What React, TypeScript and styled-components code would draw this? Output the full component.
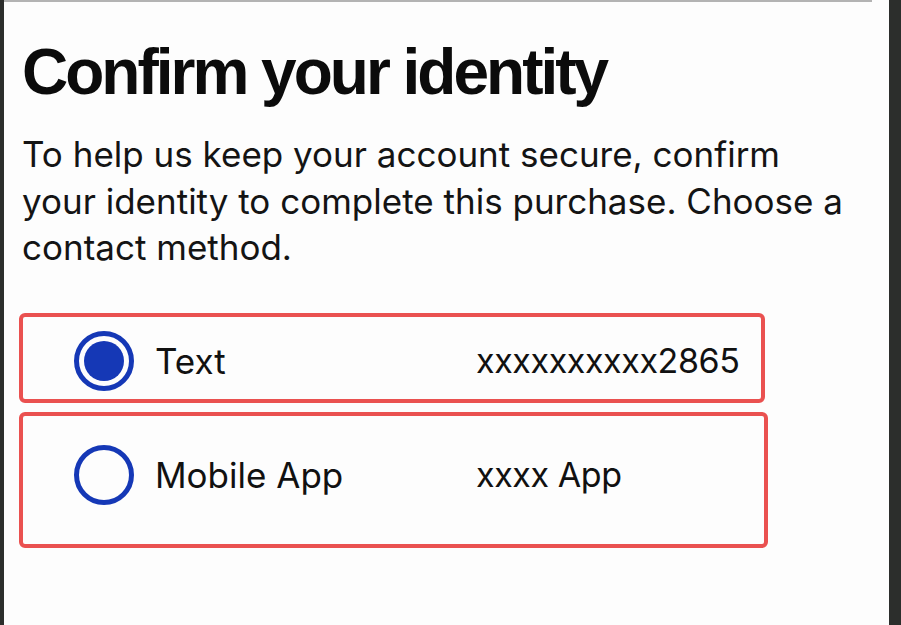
import React from "react";
import styled, { createGlobalStyle } from "styled-components";

const Global = createGlobalStyle`
  html, body { margin: 0; padding: 0; background: #2c2e2c; }
  body { font-family: Inter, "Liberation Sans", Arial, sans-serif; }
`;

const Frame = styled.div`
  width: 901px;
  height: 625px;
  display: flex;
  background: #2c2e2c;
  overflow: hidden;
`;

const Panel = styled.main`
  margin-left: 4px;
  width: 885px;
  height: 625px;
  background: #fdfdfd;
  display: flex;
  flex-direction: column;
`;

const TopRule = styled.div`
  width: 868px;
  height: 2px;
  background: #b3b3b3;
`;

const Content = styled.section`
  padding: 30px 0 0 18px;
  display: flex;
  flex-direction: column;
`;

const Title = styled.h1`
  margin: 0;
  font-family: "Liberation Sans", Arial, sans-serif;
  font-weight: 700;
  font-size: 64px;
  line-height: 80px;
  letter-spacing: -3px;
  color: #0b0b0b;
`;

const Lead = styled.p`
  margin: 19px 0 0 0;
  width: 822px;
  font-size: 35px;
  line-height: 46.5px;
  color: #141414;
`;

const Options = styled.div`
  margin-top: 42px;
  display: flex;
  flex-direction: column;
  gap: 9px;
`;

const Option = styled.label<{ $w: number; $h: number; $shift: number }>`
  box-sizing: border-box;
  width: ${(p) => p.$w}px;
  height: ${(p) => p.$h}px;
  margin-left: -3px;
  border: 4px solid #ea5150;
  border-radius: 6px;
  display: grid;
  grid-template-columns: 60px 300px auto;
  column-gap: 21px;
  align-items: center;
  padding-left: 51px;
  padding-top: ${(p) => (p.$shift > 0 ? p.$shift * 2 : 0)}px;
  padding-bottom: ${(p) => (p.$shift < 0 ? -p.$shift * 2 : 0)}px;
  cursor: pointer;
`;

const Radio = styled.span<{ $checked?: boolean }>`
  box-sizing: border-box;
  width: 60px;
  height: 60px;
  border-radius: 50%;
  border: 5px solid #1538b6;
  display: flex;
  align-items: center;
  justify-content: center;
  &::after {
    content: "";
    display: ${(p) => (p.$checked ? "block" : "none")};
    width: 40px;
    height: 40px;
    border-radius: 50%;
    background: #1538b6;
  }
`;

const Label = styled.span`
  font-size: 35px;
  color: #111;
`;

const Value = styled.span`
  font-size: 34px;
  letter-spacing: -0.4px;
  color: #111;
`;

export default function App() {
  return (
    <>
      <Global />
      <Frame>
        <Panel>
          <TopRule />
          <Content>
            <Title>Confirm your identity</Title>
            <Lead>
              To help us keep your account secure, confirm your identity to complete this purchase. Choose a contact method.
            </Lead>
            <Options>
              <Option $w={746} $h={90} $shift={3}>
                <Radio $checked />
                <Label>Text</Label>
                <Value>xxxxxxxxxx2865</Value>
              </Option>
              <Option $w={749} $h={136} $shift={-5}>
                <Radio />
                <Label>Mobile App</Label>
                <Value>xxxx App</Value>
              </Option>
            </Options>
          </Content>
        </Panel>
      </Frame>
    </>
  );
}
